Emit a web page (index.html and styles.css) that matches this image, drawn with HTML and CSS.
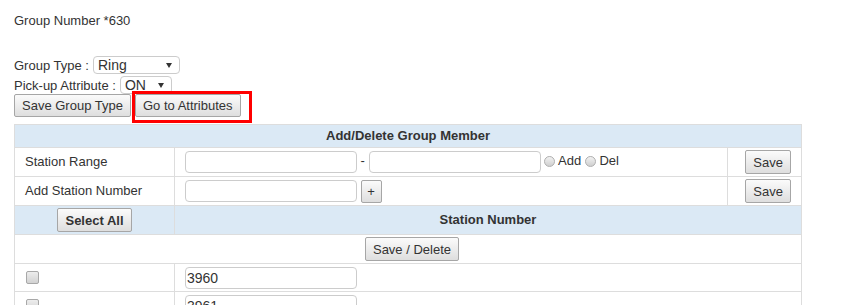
FILE: index.html
```html
<!DOCTYPE html>
<html lang="en">
<head>
<meta charset="utf-8">
<title>Group Number *630</title>
<link rel="stylesheet" href="styles.css">
</head>
<body>
<div class="page">
  <p class="group-number">Group Number *630</p>

  <div class="field-row">
    <label class="field-label">Group Type :</label>
    <span class="select-wrap select-type"><select class="select"><option>Ring</option><option>Linear</option></select></span>
  </div>
  <div class="field-row">
    <label class="field-label">Pick-up Attribute :</label>
    <span class="select-wrap select-pickup"><select class="select"><option>ON</option><option>OFF</option></select></span>
  </div>
  <div class="button-row">
    <button class="btn">Save Group Type</button>
    <span class="highlight"><button class="btn">Go to Attributes</button></span>
  </div>

  <table class="member-table">
    <colgroup>
      <col class="col-first">
      <col class="col-main">
      <col class="col-action">
    </colgroup>
    <tr class="head-row">
      <th colspan="3">Add/Delete Group Member</th>
    </tr>
    <tr>
      <td class="label-cell">Station Range</td>
      <td class="input-cell"><input class="text-input" type="text"> - <input class="text-input" type="text"> <input class="radio" type="radio" name="mode"> Add <input class="radio" type="radio" name="mode"> Del</td>
      <td class="action-cell"><button class="btn btn-table">Save</button></td>
    </tr>
    <tr>
      <td class="label-cell">Add Station Number</td>
      <td class="input-cell"><input class="text-input" type="text"> <button class="btn btn-plus">+</button></td>
      <td class="action-cell"><button class="btn btn-table">Save</button></td>
    </tr>
    <tr class="head-row">
      <th><button class="btn btn-table btn-bold">Select All</button></th>
      <th colspan="2">Station Number</th>
    </tr>
    <tr>
      <td colspan="3" class="center-cell"><button class="btn btn-table">Save / Delete</button></td>
    </tr>
    <tr class="station-row">
      <td class="label-cell"><input class="check" type="checkbox"></td>
      <td colspan="2" class="input-cell"><input class="text-input station-input" type="text" value="3960"></td>
    </tr>
    <tr class="station-row">
      <td class="label-cell"><input class="check" type="checkbox"></td>
      <td colspan="2" class="input-cell"><input class="text-input station-input" type="text" value="3961"></td>
    </tr>
  </table>
</div>
</body>
</html>
```

FILE: styles.css
```css
html {
  overflow: hidden;
}

body {
  margin: 0;
  font-family: "Liberation Sans", Arial, sans-serif;
  font-size: 13px;
  color: #333;
  background: #fff;
}

.page {
  padding: 13px 14px 0;
}

.group-number {
  margin: 0 0 27px;
  line-height: 15px;
}

.field-row {
  display: flex;
  align-items: center;
  gap: 4px;
  height: 20px;
}

.field-label {
  line-height: 15px;
}

.select-wrap {
  position: relative;
  display: inline-block;
}

.select-wrap::after {
  content: "";
  position: absolute;
  right: 8px;
  top: 7px;
  border-left: 3px solid transparent;
  border-right: 3px solid transparent;
  border-top: 5px solid #333;
  pointer-events: none;
}

.select {
  appearance: none;
  -webkit-appearance: none;
  display: block;
  height: 18px;
  margin: 0;
  padding: 0 18px 0 4px;
  border: 1px solid #ccc;
  border-radius: 4px;
  background: #fff;
  font-family: "Liberation Sans", Arial, sans-serif;
  font-size: 14px;
  line-height: 16px;
  color: #333;
}

.select-type .select {
  width: 87px;
}

.select-pickup .select {
  width: 52px;
}

.button-row {
  display: flex;
  align-items: center;
  gap: 4px;
  margin-top: -1px;
}

.btn {
  height: 23px;
  margin: 0;
  padding: 0 7px;
  border: 1px solid #a6a6a6;
  border-radius: 2px;
  background: linear-gradient(#fbfbfb, #dedede);
  font-family: "Liberation Sans", Arial, sans-serif;
  font-size: 13px;
  color: #333;
  cursor: pointer;
}

.highlight {
  position: relative;
  display: inline-flex;
}

.highlight::after {
  content: "";
  position: absolute;
  left: -3px;
  top: -3px;
  right: -11px;
  bottom: -6px;
  border: 3px solid #f00;
  pointer-events: none;
}

.member-table {
  width: 788px;
  margin-top: 7px;
  border-collapse: collapse;
  table-layout: fixed;
}

.col-first {
  width: 160px;
}

.col-action {
  width: 74px;
}

.member-table th,
.member-table td {
  border: 1px solid #ddd;
  padding: 2px 10px;
  line-height: 18px;
  vertical-align: middle;
}

.head-row th {
  background: #dbe9f5;
  font-weight: bold;
  text-align: center;
  color: #333;
}

.label-cell {
  text-align: left;
}

.member-table .action-cell {
  text-align: right;
}

.member-table .center-cell {
  text-align: center;
  padding-left: 18px;
}

.btn-table {
  height: 24px;
  vertical-align: middle;
}

.btn-bold {
  font-weight: bold;
}

.btn-plus {
  width: 21px;
  padding: 0;
  vertical-align: middle;
}

.text-input {
  box-sizing: border-box;
  width: 172px;
  height: 22px;
  margin: 0;
  padding: 0 4px;
  border: 1px solid #ccc;
  border-radius: 4px;
  background: #fff;
  font-family: "Liberation Sans", Arial, sans-serif;
  font-size: 14px;
  color: #333;
  vertical-align: middle;
}

.station-input {
  padding-left: 1px;
}

.station-row td {
  height: 23px;
}

.radio {
  appearance: none;
  -webkit-appearance: none;
  width: 11px;
  height: 11px;
  margin: 0;
  border: 1px solid #b0b0b0;
  border-radius: 50%;
  background: linear-gradient(#f2f2f2, #cfcfcf);
  vertical-align: middle;
  position: relative;
  top: -1px;
}

.check {
  appearance: none;
  -webkit-appearance: none;
  display: block;
  width: 13px;
  height: 13px;
  margin: 0 0 0 1px;
  border: 1px solid #a8a8a8;
  border-radius: 2px;
  background: linear-gradient(#ededed, #d2d2d2);
}
```
